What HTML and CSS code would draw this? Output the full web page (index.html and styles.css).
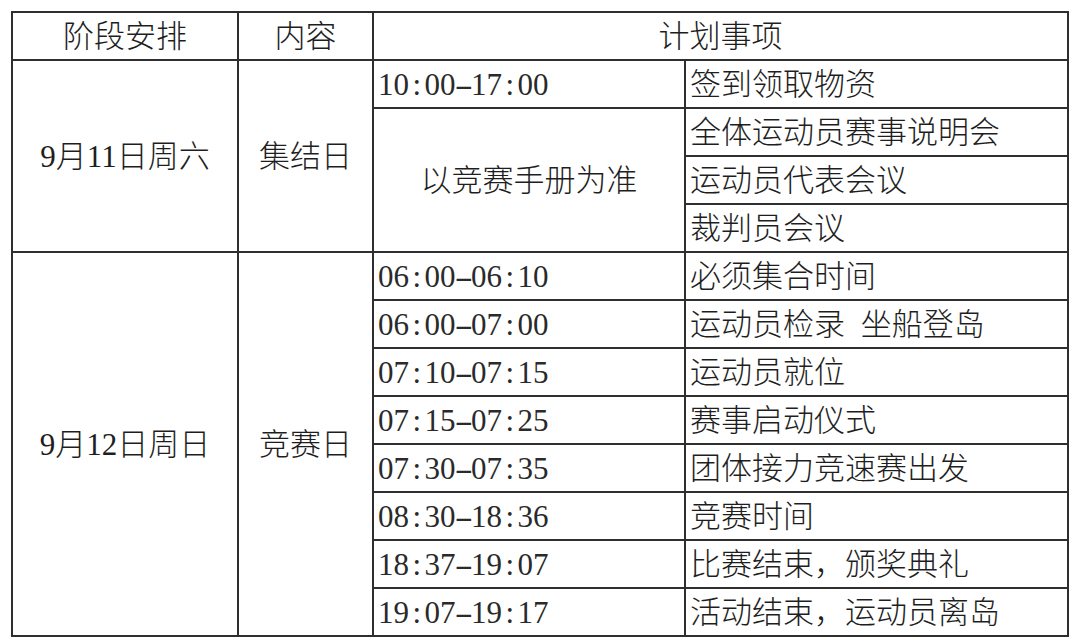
FILE: index.html
```html
<!DOCTYPE html>
<html lang="zh-CN">
<head>
<meta charset="utf-8">
<title>阶段安排</title>
<link rel="stylesheet" href="styles.css">
</head>
<body>
<div class="sheet">
  <div class="cell center">阶段安排</div>
  <div class="cell center">内容</div>
  <div class="cell center span-plan">计划事项</div>

  <div class="cell center day1">9月11日周六</div>
  <div class="cell center day1-type">集结日</div>
  <div class="cell time">10<span class="sep">:</span>00<span class="sep dash">-</span>17<span class="sep">:</span>00</div>
  <div class="cell item">签到领取物资</div>
  <div class="cell center manual">以竞赛手册为准</div>
  <div class="cell item">全体运动员赛事说明会</div>
  <div class="cell item">运动员代表会议</div>
  <div class="cell item">裁判员会议</div>

  <div class="cell center day2">9月12日周日</div>
  <div class="cell center day2-type">竞赛日</div>
  <div class="cell time">06<span class="sep">:</span>00<span class="sep dash">-</span>06<span class="sep">:</span>10</div>
  <div class="cell item">必须集合时间</div>
  <div class="cell time">06<span class="sep">:</span>00<span class="sep dash">-</span>07<span class="sep">:</span>00</div>
  <div class="cell item">运动员检录 坐船登岛</div>
  <div class="cell time">07<span class="sep">:</span>10<span class="sep dash">-</span>07<span class="sep">:</span>15</div>
  <div class="cell item">运动员就位</div>
  <div class="cell time">07<span class="sep">:</span>15<span class="sep dash">-</span>07<span class="sep">:</span>25</div>
  <div class="cell item">赛事启动仪式</div>
  <div class="cell time">07<span class="sep">:</span>30<span class="sep dash">-</span>07<span class="sep">:</span>35</div>
  <div class="cell item">团体接力竞速赛出发</div>
  <div class="cell time">08<span class="sep">:</span>30<span class="sep dash">-</span>18<span class="sep">:</span>36</div>
  <div class="cell item">竞赛时间</div>
  <div class="cell time">18<span class="sep">:</span>37<span class="sep dash">-</span>19<span class="sep">:</span>07</div>
  <div class="cell item">比赛结束，颁奖典礼</div>
  <div class="cell time">19<span class="sep">:</span>07<span class="sep dash">-</span>19<span class="sep">:</span>17</div>
  <div class="cell item">活动结束，运动员离岛</div>
</div>
</body>
</html>
```

FILE: styles.css
```css
html, body {
  margin: 0;
  padding: 0;
  background: #ffffff;
}

body {
  padding: 11px 0 0 11px;
  font-family: "Liberation Serif", "Noto Sans CJK SC", serif;
  font-size: 31px;
  font-weight: 300;
  color: #1e1e1e;
}

.sheet {
  display: grid;
  grid-template-columns: 224px 133px 310px 381px;
  grid-auto-rows: 46px;
  gap: 2px;
  padding: 2px;
  width: 1054px;
  background: #2e2e2e;
}

.cell {
  background: #ffffff;
  display: flex;
  align-items: center;
  line-height: 1;
  white-space: nowrap;
  word-spacing: 8px;
}

.center {
  justify-content: center;
}

.time,
.item {
  padding-left: 4px;
}

.time {
  color: #2a2a2a;
}

.sep {
  display: inline-block;
  width: 0.5em;
  text-align: center;
}

.dash {
  transform: scaleX(1.8);
}

.span-plan {
  grid-column: 3 / 5;
}

.day1 {
  grid-column: 1;
  grid-row: 2 / 6;
}

.day1-type {
  grid-column: 2;
  grid-row: 2 / 6;
}

.manual {
  grid-column: 3;
  grid-row: 3 / 6;
}

.day2 {
  grid-column: 1;
  grid-row: 6 / 14;
}

.day2-type {
  grid-column: 2;
  grid-row: 6 / 14;
}
```
